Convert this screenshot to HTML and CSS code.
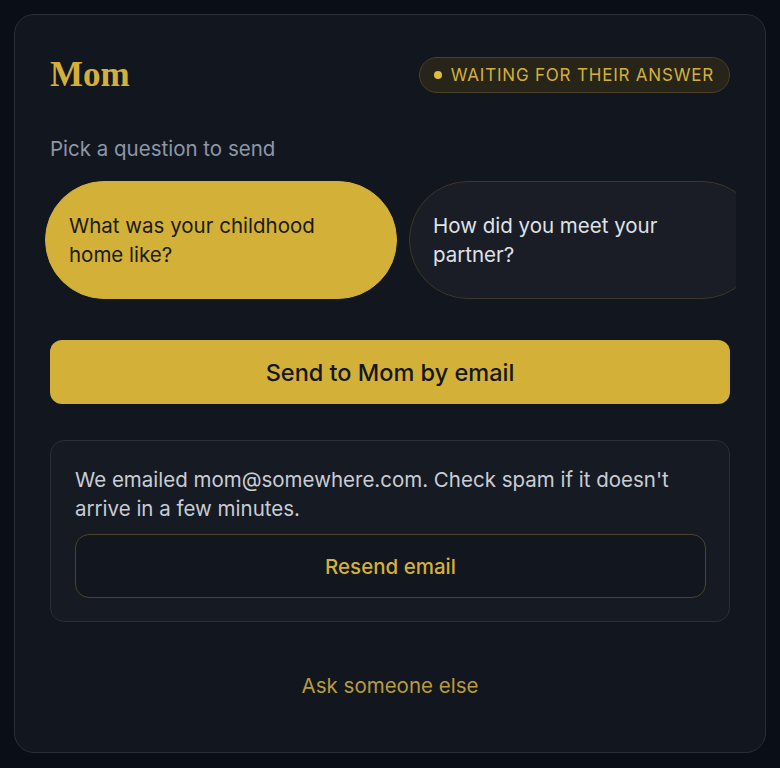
FILE: index.html
```html
<!DOCTYPE html>
<html lang="en">
<head>
    <meta charset="UTF-8">
    <meta name="viewport" content="width=device-width, initial-scale=1.0">
    <title>Ask Mom</title>
    <link rel="stylesheet" href="styles.css">
</head>
<body>
    <div class="card">
        <div class="header">
            <h1 class="name">Mom</h1>
            <span class="badge"><span class="dot"></span>Waiting for their answer</span>
        </div>

        <p class="hint">Pick a question to send</p>

        <!-- questions scroll sideways -->
        <div class="chips">
            <button class="chip selected">What was your childhood home like?</button>
            <button class="chip">How did you meet your partner?</button>
        </div>

        <button class="send">Send to Mom by email</button>

        <div class="notice">
            <p>We emailed mom@somewhere.com. Check spam if it doesn't arrive in a few minutes.</p>
            <button class="resend">Resend email</button>
        </div>

        <a class="other" href="#">Ask someone else</a>
    </div>
</body>
</html>
```

FILE: styles.css
```css
body {
    margin: 0;
    padding: 14px;
    background-color: #0a0e16;
    font-family: Inter, "Noto Sans", sans-serif;
    color: #c9cdd5;
}
.card {
    background-color: #12161f;
    border: 1px solid #2a2e35;
    border-radius: 20px;
    padding: 35px 35px 50px;
    display: flex;
    flex-direction: column;
    height: 652px;
}
.header {
    display: flex;
    align-items: center;
    justify-content: space-between;
    height: 50px;
}
.name {
    margin: 0;
    font-family: "Liberation Serif", "DejaVu Serif", serif;
    font-weight: 700;
    font-size: 35px;
    color: #d4b03a;
}
.badge {
    display: flex;
    align-items: center;
    gap: 9px;
    height: 34px;
    padding: 0 15px 0 14px;
    border: 1px solid #4a4128;
    border-radius: 18px;
    background-color: #27241a;
    color: #d4b03a;
    font-size: 17px;
    text-transform: uppercase;
    letter-spacing: 0.8px;
}
.dot {
    width: 8px;
    height: 8px;
    border-radius: 50%;
    background-color: #e0bb3e;
}
.hint {
    margin: 34px 0 0;
    font-size: 20.5px;
    line-height: 29px;
    color: #8d97a8;
}
.chips {
    display: flex;
    gap: 12px;
    margin: 18px -6px 0;
    padding-left: 1px;
    overflow: hidden;
}
.chip {
    flex: 0 0 352px;
    height: 118px;
    padding: 0 44px 0 23px;
    border: 1px solid #3b3729;
    border-radius: 59px;
    background-color: #1a1d25;
    color: #dfe2e8;
    font-family: inherit;
    font-size: 20.5px;
    line-height: 29px;
    text-align: left;
}
.chip.selected {
    background-color: #d3b038;
    border-color: #d3b038;
    color: #1a1a16;
}
.send {
    margin-top: 41px;
    height: 64px;
    border: none;
    border-radius: 12px;
    background-color: #d3b038;
    color: #15171c;
    font-family: inherit;
    font-size: 23.5px;
    font-weight: 500;
}
.notice {
    margin-top: 36px;
    padding: 24px 23px 23px 24px;
    border: 1px solid #2a2e35;
    border-radius: 14px;
    background-color: #161a22;
}
.notice p {
    margin: 0 0 11px;
    font-size: 20.5px;
    line-height: 29px;
    color: #c9cdd5;
}
.resend {
    width: 100%;
    height: 64px;
    border: 1px solid #4d4428;
    border-radius: 14px;
    background-color: #12161f;
    color: #d4b03a;
    font-family: inherit;
    font-size: 20.5px;
    font-weight: 500;
}
.other {
    margin-top: 49px;
    text-align: center;
    font-size: 20.5px;
    line-height: 29px;
    color: #b99b3c;
    text-decoration: none;
}
```
